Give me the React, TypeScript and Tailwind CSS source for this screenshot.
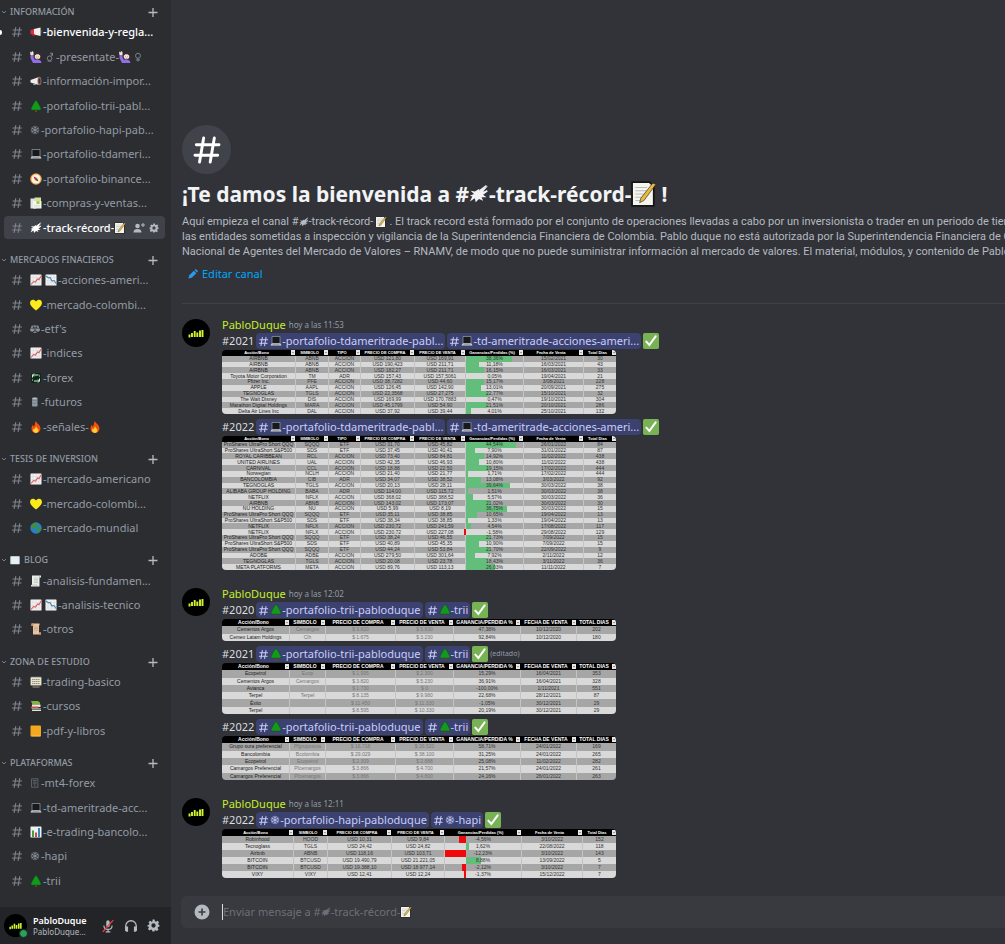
import type { ReactNode } from 'react';
import clsx from 'clsx';

/* ---------- drawings ---------- */

const chartGrid = (
  <>
    <rect x="1" y="1" width="22" height="22" rx="1" fill="#f3f1f1" />
    <path d="M6 1v22M12 1v22M18 1v22M1 7h22M1 13h22M1 18h22" stroke="#d5d3d6" strokeWidth="1" />
  </>
);

const raisingHand = (
  <>
    <path d="M7 13c-2-11 15-13 16-2 0 5 0 9 1 11H7z" fill="#3b2a36" />
    <circle cx="15" cy="11" r="5.500" fill="#f7e3cf" />
    <path d="M9 10c2-5 10-5 12 0l1-5-7-3-5 3z" fill="#3b2a36" />
    <path d="M1 7h6v6l3 5c4-2 12-1 13 6H6L1 14z" fill="#8f6fe6" />
    <path d="M0 1l3 2 1-3 3 2 0 6H1z" fill="#f7e3cf" />
    <path d="M13 14q2 2 4 0M13 10v1M17 10v1" stroke="#5a3b35" fill="none" />
  </>
);

const drawings: Record<string, ReactNode> = {
  megaphone: (
    <>
      <path d="M1 8l7-2v12l-7-2z" fill="#dd2e44" />
      <path d="M8 6l13-3v17L8 17z" fill="#f4f0ee" />
      <path d="M21 3c2 4 2 13 0 17" fill="#b8a7a7" />
      <path d="M4 17h6l1 3H5z" fill="#be1931" />
    </>
  ),
  speaker: (
    <>
      <path d="M1 10l17-6v16L1 15z" fill="#efedec" />
      <ellipse cx="19" cy="12" rx="4" ry="8.5" fill="#8d6460" />
      <ellipse cx="19" cy="12" rx="2" ry="5.5" fill="#3d3030" />
      <path d="M6 17l6 2v1H7z" fill="#aaa4a4" />
    </>
  ),
  hand: raisingHand,
  male: (
    <g fill="none" stroke="currentColor" strokeWidth="1.8">
      <circle cx="11" cy="15" r="5.5" />
      <path d="M14 10l4-7M12 3h6v6M6 22h10" />
    </g>
  ),
  female: (
    <g fill="none" stroke="currentColor" strokeWidth="1.8">
      <circle cx="12" cy="9" r="6" />
      <path d="M12 15v8M7 19h10" />
    </g>
  ),
  tree: (
    <>
      <path d="M10 18h4v6h-4z" fill="#6b4226" />
      <path d="M12 0c3 4 5 7 7 11 2 5 4 7 3 8-2 2-6 1-10 1s-8 1-10-1c-1-1 1-3 3-8 2-4 4-7 7-11z" fill="#14991f" stroke="#0a4a13" />
    </>
  ),
  snow: (
    <g fill="none" stroke="currentColor" strokeWidth="2">
      <path d="M12 2v20M3 7l18 10M21 7L3 17" />
      <path d="M8 3l4 4 4-4M8 21l4-4 4 4M2 11l5-2V4M22 13l-5 2v5M22 11l-5-2V4M2 13l5 2v5" strokeWidth="1.5" />
    </g>
  ),
  laptop: (
    <>
      <path d="M4 3h16v14H4z" fill="#17191d" stroke="#9a9fa6" strokeWidth="1.4" />
      <path d="M3 17h18l2 4H1z" fill="#cfd3d8" />
      <path d="M5 19h14" stroke="#6f747c" />
    </>
  ),
  compass: (
    <>
      <circle cx="12" cy="12" r="11.5" fill="#f0a64a" />
      <circle cx="12" cy="12" r="9" fill="#fff3dc" />
      <path d="M7 7l7 3-4 4z" fill="#c42f36" />
      <path d="M17 17l-7-3 4-4z" fill="#4a4d59" />
    </>
  ),
  dividers: (
    <>
      <path d="M1 3h12v20H1z" fill="#dfe4e8" />
      <path d="M9 1h13v8H9z" fill="#d6e2a0" />
      <path d="M6 8h17v15H6z" fill="#f5f5ef" />
      <path d="M13 8h6v6h-6z" fill="#a5c94b" />
      <path d="M8 17h12M8 20h12" stroke="#c6c9ba" />
    </>
  ),
  comet: (
    <>
      <path d="M7 9l5-3 1 2 10-6-6 7 5 0-5 4 4 3-6 0 2 4-5-2-4 4-1-5-6 4 3-6-3-1 5-2-4-4z" fill="currentColor" />
      <path d="M13 8l8-6M15 12l7-4" stroke="currentColor" strokeWidth="2" />
    </>
  ),
  memo: (
    <>
      <path d="M1 1h16l4 4v18H1z" fill="#f5f5ee" stroke="#141414" strokeWidth="1.6" />
      <path d="M4 6h11M4 9h11M4 12h9M4 15h7M4 18h6" stroke="#b9bdc3" />
      <path d="M23 3l-3-1L9 16l-1 4 4-2z" fill="#e8b83f" stroke="#2a2a2a" strokeWidth=".6" />
    </>
  ),
  up: (
    <>
      {chartGrid}
      <path d="M2 21l5-6 4 1 4-6 3 1 5-8" fill="none" stroke="#d8605f" strokeWidth="2.2" />
    </>
  ),
  down: (
    <>
      {chartGrid}
      <path d="M2 4l5 4 3-1 4 7 4-1 5 7" fill="none" stroke="#3b88b9" strokeWidth="2.2" />
    </>
  ),
  heart: <path d="M12 23C6 18 0 13 0 8 0 1 8-1 12 5c4-6 12-4 12 3 0 5-6 10-12 15z" fill="#fdea1a" />,
  scales: (
    <g fill="none" stroke="currentColor" strokeWidth="2">
      <path d="M12 3v17M8 20h8M4 5h16M5 5l-3 8M5 5l3 8M19 5l-3 8M19 5l3 8" />
      <path d="M1 13h8c0 6-8 6-8 0zM15 13h8c0 6-8 6-8 0z" fill="currentColor" />
    </g>
  ),
  exchange: (
    <>
      <rect x="2" y="2" width="20" height="20" rx="3" fill="#10271c" />
      <path d="M5 11V6h11M8 3L5 6l3 3M19 13v5H8M16 21l3-3-3-3" fill="none" stroke="#d7efd9" strokeWidth="2" />
      <path d="M16 6h3v4M5 14v4" stroke="#3ea85c" strokeWidth="2" fill="none" />
    </>
  ),
  drum: (
    <>
      <rect x="5" y="1" width="13" height="22" rx="2" fill="#8e99a4" />
      <path d="M5 8h13M5 15h13" stroke="#66717c" strokeWidth="1.4" />
      <ellipse cx="11.5" cy="3" rx="5" ry="1.5" fill="#c3cbd2" />
    </>
  ),
  fire: (
    <>
      <path d="M12 0c1 5 9 7 9 15 0 5-4 9-9 9s-9-3-9-9c0-4 2-6 3-8 0 3 1 4 2 4 2-3 1-7 4-11z" fill="#f4500d" />
      <path d="M12 10c0 4 5 5 5 9 0 3-3 5-5 5s-6-2-6-5c0-2 1-3 2-4 1 2 3 0 4-5z" fill="#ffcc3d" />
    </>
  ),
  globe: (
    <>
      <circle cx="12" cy="12" r="11.5" fill="#2a7fc4" />
      <path d="M4 5c4-5 10-4 11-2l-2 3 3 2-4 4-3-1-3 3-4-5zM14 12l6-2 3 4-5 7-4-2z" fill="#3f8f3c" />
    </>
  ),
  envelope: (
    <>
      <rect x="1" y="3" width="22" height="19" rx="1" fill="#e6f0f5" />
      <path d="M2 21V4h20v17" fill="none" stroke="#c9dbe4" />
    </>
  ),
  receipt: (
    <>
      <path d="M4 1h18v4h-3v18H2v-3h2z" fill="#e9eeea" />
      <path d="M8 6h8M8 9h8M8 12h8M8 15h8" stroke="#a3aba6" />
      <path d="M19 1v4M2 20h12v3" stroke="#9aa19d" fill="none" />
    </>
  ),
  scroll: (
    <>
      <path d="M3 1h16v4h-1v14h4v4H6V6H3z" fill="#e9c4a4" />
      <path d="M8 8h8M8 11h8M8 14h8" stroke="#b78c6a" />
      <path d="M3 1h4v5H3zM18 19h4v4h-4z" fill="#c8946c" />
    </>
  ),
  abacus: (
    <>
      <rect x="1" y="2" width="22" height="17" rx="2" fill="#e9e3d2" stroke="#7a766c" strokeWidth="1.4" />
      <path d="M4 7h16M4 11h16M4 15h16" stroke="#6c6a63" strokeDasharray="3 1" strokeWidth="1.4" />
      <path d="M5 22h14" stroke="#8a8579" strokeWidth="2.4" />
    </>
  ),
  books: (
    <>
      <path d="M2 2h14l4 3v4H5z" fill="#7cb342" />
      <path d="M4 9h17v5H4z" fill="#efe9e0" />
      <path d="M2 13h15v4H2z" fill="#c9554a" />
      <path d="M4 17h18v5H4z" fill="#e4e4dc" />
      <path d="M4 19h18" stroke="#3e6e3c" strokeWidth="1.6" />
    </>
  ),
  book: (
    <>
      <rect x="1" y="1" width="21" height="22" rx="2" fill="#f4a81d" />
      <path d="M3 22h18" stroke="#ffe2a8" strokeWidth="1" />
    </>
  ),
  server: (
    <g fill="none" stroke="#6d737d" strokeWidth="1.8">
      <rect x="4" y="2" width="15" height="20" />
      <path d="M7 6h9M7 10h9M7 14h9M10 18h3" />
    </g>
  ),
  bars: (
    <>
      <rect x="1" y="1" width="22" height="22" rx="1" fill="#edf1f2" />
      <path d="M4 9h4v13H4z" fill="#4a9b3f" />
      <path d="M10 13h4v9h-4z" fill="#cf4747" />
      <path d="M16 4h4v18h-4z" fill="#3487bd" />
    </>
  ),
  check: (
    <>
      <rect x="0" y="0" width="24" height="24" rx="2.5" fill="#77b255" />
      <path d="M5 13l4.5 5L19 5" fill="none" stroke="#fff" strokeWidth="3" strokeLinecap="round" />
    </>
  ),
};

function Emoji({ name, className = 'size-3' }: { name: string; className?: string }) {
  return (
    <svg viewBox="0 0 24 24" className={clsx('inline-block shrink-0', className)} aria-hidden="true">
      {drawings[name]}
    </svg>
  );
}

function Hash({ className }: { className: string }) {
  return (
    <svg viewBox="0 0 24 24" className={clsx('inline-block shrink-0', className)} fill="none" stroke="currentColor" strokeWidth="2.2" strokeLinecap="round" aria-hidden="true">
      <path d="M9.5 3L6.4 21M17.5 3l-3.1 18M4 8h17M3 16h17" />
    </svg>
  );
}

function Gear({ className }: { className: string }) {
  return (
    <svg viewBox="0 0 24 24" className={className} fill="currentColor" aria-hidden="true">
      <path
        fillRule="evenodd"
        d="M10 1h4l.7 3.2 1.9.8 2.8-1.7 2.8 2.8-1.7 2.8.8 1.9L23 11v3l-2.700.8-.8 1.900 1.700 2.800-2.800 2.800-2.800-1.700-1.900.8L14 23h-4l-.7-2.600-1.900-.8-2.800 1.700-2.800-2.800 1.700-2.800-.8-1.900L1 14v-3l2.700-.2.800-1.900L2.800 6.100l2.800-2.800L8.400 5l1.900-.8zM12 8a4 4 0 1 0 0 8 4 4 0 0 0 0-8z"
      />
    </svg>
  );
}

function Avatar({ className }: { className: string }) {
  return (
    <svg viewBox="0 0 28 28" className={clsx('shrink-0', className)} role="img" aria-label="PabloDuque">
      <circle cx="14" cy="14" r="14" fill="#000" />
      <path d="M7.500 15.500v3M10 14v4M12.700 12v6M15.300 13.500v4.500M18 11.500v6.500M20.500 11v7" stroke="#d3f52b" strokeWidth="1.900" />
    </svg>
  );
}

/* ---------- sidebar ---------- */

interface Channel {
  icons: string[];
  name: string;
  after?: string[];
  unread?: boolean;
  active?: boolean;
}

interface Category {
  title: string;
  icon?: string;
  channels: Channel[];
}

const categories: Category[] = [
  {
    title: 'INFORMACIÓN',
    channels: [
      { icons: ['megaphone'], name: '-bienvenida-y-regla...', unread: true },
      { icons: ['hand', 'male'], name: '-presentate-', after: ['hand', 'female'] },
      { icons: ['speaker'], name: '-información-impor...' },
      { icons: ['tree'], name: '-portafolio-trii-pabl...' },
      { icons: ['snow'], name: '-portafolio-hapi-pab...' },
      { icons: ['laptop'], name: '-portafolio-tdameri...' },
      { icons: ['compass'], name: '-portafolio-binance...' },
      { icons: ['dividers'], name: '-compras-y-ventas...' },
      { icons: ['comet'], name: '-track-récord-', after: ['memo'], active: true },
    ],
  },
  {
    title: 'MERCADOS FINACIEROS',
    channels: [
      { icons: ['up', 'down'], name: '-acciones-ameri...' },
      { icons: ['heart'], name: '-mercado-colombi...' },
      { icons: ['scales'], name: "-etf's" },
      { icons: ['up'], name: '-indices' },
      { icons: ['exchange'], name: '-forex' },
      { icons: ['drum'], name: '-futuros' },
      { icons: ['fire'], name: '-señales-', after: ['fire'] },
    ],
  },
  {
    title: 'TESIS DE INVERSION',
    channels: [
      { icons: ['up'], name: '-mercado-americano' },
      { icons: ['heart'], name: '-mercado-colombi...' },
      { icons: ['globe'], name: '-mercado-mundial' },
    ],
  },
  {
    title: 'BLOG',
    icon: 'envelope',
    channels: [
      { icons: ['receipt'], name: '-analisis-fundamen...' },
      { icons: ['up', 'down'], name: '-analisis-tecnico' },
      { icons: ['scroll'], name: '-otros' },
    ],
  },
  {
    title: 'ZONA DE ESTUDIO',
    channels: [
      { icons: ['abacus'], name: '-trading-basico' },
      { icons: ['books'], name: '-cursos' },
      { icons: ['book'], name: '-pdf-y-libros' },
    ],
  },
  {
    title: 'PLATAFORMAS',
    channels: [
      { icons: ['server'], name: '-mt4-forex' },
      { icons: ['laptop'], name: '-td-ameritrade-acc...' },
      { icons: ['bars'], name: '-e-trading-bancolo...' },
      { icons: ['snow'], name: '-hapi' },
      { icons: ['tree'], name: '-trii' },
    ],
  },
];

const iconSizes: Record<string, string> = {
  snow: 'size-[10px]',
  drum: 'size-[10px]',
  server: 'size-[10px]',
  scales: 'size-[10px]',
  male: 'size-[10px]',
  female: 'ml-[2px] size-[10px]',
};

function CategoryHeader({ category, first }: { category: Category; first: boolean }) {
  return (
    <div className={clsx('flex shrink-0 items-center pr-3 pl-[2px]', first ? 'h-5 pt-1' : 'h-7 pt-3')}>
      <h2 className="flex flex-1 items-center gap-1 text-[9px] leading-3 font-medium text-[#949ba4]">
        <svg viewBox="0 0 8 8" className="w-1 shrink-0" fill="none" stroke="currentColor" strokeWidth="1.5" aria-hidden="true">
          <path d="M0 2l4 4 4-4" />
        </svg>
        {category.icon && <Emoji name={category.icon} className="size-[10px]" />}
        {category.title}
      </h2>
      <button type="button" aria-label={`Crear canal en ${category.title}`} className="text-[#b5bac1]">
        <svg viewBox="0 0 12 12" className="size-3" stroke="currentColor" strokeWidth="1.3" aria-hidden="true">
          <path d="M6 2v9M1.500 6.500h9" />
        </svg>
      </button>
    </div>
  );
}

function ChannelRow({ channel }: { channel: Channel }) {
  return (
    <div className="relative flex min-h-5 flex-1 items-center pr-[6px] pl-1">
      {channel.unread && <span className="absolute left-0 h-[5px] w-[2px] rounded-r-full bg-white" />}
      <div className={clsx('flex h-[23px] min-w-0 flex-1 items-center rounded pl-[7px]', channel.active && 'bg-[#404249]')}>
        <a
          href="#canal"
          className={clsx(
            'flex min-w-0 flex-1 items-center text-[11px] leading-4 whitespace-nowrap',
            channel.unread && 'font-medium text-white',
            channel.active && 'font-medium text-white',
            !channel.unread && !channel.active && 'text-[#949ba4]',
          )}
        >
          <Hash className="mr-[7px] size-3 text-[#80848e]" />
          <span className="flex items-center gap-[3px]">
            {channel.icons.map((icon) => (
              <Emoji key={icon} name={icon} className={iconSizes[icon]} />
            ))}
          </span>
          <span className="ml-px">{channel.name}</span>
          {channel.after?.map((icon) => <Emoji key={icon} name={icon} className={iconSizes[icon]} />)}
        </a>
        {channel.active && (
          <span className="flex items-center gap-1 pr-[6px] text-[#b5bac1]">
            <button type="button" aria-label="Crear invitación">
              <svg viewBox="0 0 24 24" className="size-3" fill="currentColor" aria-hidden="true">
                <circle cx="9" cy="8" r="4.500" />
                <path d="M1 21c0-5 3-7 8-7s8 2 8 7zM19 2h2v3h3v2h-3v3h-2V7h-3V5h3z" />
              </svg>
            </button>
            <button type="button" aria-label="Editar canal">
              <Gear className="size-[10px]" />
            </button>
          </span>
        )}
      </div>
    </div>
  );
}

function UserPanel() {
  return (
    <div className="flex h-[37px] shrink-0 items-center bg-[#232428] pr-[11px] pl-1">
      <div className="relative mr-[6px]">
        <Avatar className="size-[23px]" />
        <span className="absolute -right-px -bottom-px size-[9px] rounded-full border border-[#232428] bg-[#23a55a]" />
      </div>
      <div className="min-w-0 flex-1">
        <div className="text-[9px] leading-[11px] font-semibold text-white">PabloDuque</div>
        <div className="text-[8px] leading-[11px] text-[#b5bac1]">PabloDuque...</div>
      </div>
      <div className="flex items-center gap-[9px] text-[#b5bac1]">
        <button type="button" aria-label="Silenciar">
          <svg viewBox="0 0 24 24" className="size-[14px]" aria-hidden="true">
            <rect x="9" y="2" width="6" height="12" rx="3" fill="currentColor" />
            <path d="M5 11c0 9 14 9 14 0M12 18v4M8 22h8" fill="none" stroke="currentColor" strokeWidth="2" />
            <path d="M3 22L21 2" stroke="#f23f42" strokeWidth="2.200" />
          </svg>
        </button>
        <button type="button" aria-label="Ensordecer">
          <svg viewBox="0 0 24 24" className="size-[14px]" aria-hidden="true">
            <path d="M3 20v-8a9 9 0 0 1 18 0v8" fill="none" stroke="currentColor" strokeWidth="2.200" />
            <path d="M2 13h5v9H4l-2-2zM22 13h-5v9h3l2-2z" fill="currentColor" />
          </svg>
        </button>
        <button type="button" aria-label="Ajustes de usuario">
          <Gear className="size-[13px]" />
        </button>
      </div>
    </div>
  );
}

function Sidebar() {
  return (
    <aside className="flex w-[171px] shrink-0 flex-col bg-[#2b2d31]">
      <nav className="flex min-h-0 flex-1 flex-col overflow-hidden pb-[14px]" aria-label="Canales">
        {categories.map((category, i) => (
          <section key={category.title} className="contents">
            <CategoryHeader category={category} first={i === 0} />
            {category.channels.map((channel) => (
              <ChannelRow key={channel.name} channel={channel} />
            ))}
          </section>
        ))}
      </nav>
      <UserPanel />
    </aside>
  );
}

/* ---------- spreadsheets ---------- */

// a row is its cells separated by "|"
interface SheetData {
  height: string;
  cols: number[];
  head: string;
  headText: string;
  rows: string[];
  barCol?: number;
  zero?: number;
  bars?: number[];
  faint?: boolean;
}

const tdCols = [73, 33, 32, 54, 51, 58, 60, 33];
const tdHead = 'Acción/Bono|SIMBOLO|TIPO|PRECIO DE COMPRA|PRECIO DE VENTA|Ganancias/Perdidas (%)|Fecha de Venta|Total Dias';
const triiCols = [67, 36, 70, 58, 67, 56, 40];
const triiHead = 'Acción/Bono|SIMBOLO|PRECIO DE COMPRA|PRECIO DE VENTA|GANANCIA/PERDIDA %|FECHA DE VENTA|TOTAL DIAS';

const td2021: SheetData = {
  height: 'h-16',
  cols: tdCols,
  head: tdHead,
  headText: 'text-[4px]',
  barCol: 5,
  bars: [80, 22, 32, 0, 31, 26, 38, 0, 36, 8],
  rows: [
    'AIRBNB|ABNB|ACCION|USD 121,80|USD 169,91|38,36%|15/02/2021|30',
    'AIRBNB|ABNB|ACCION|USD 190,423|USD 211,71|11,18%|16/03/2021|43',
    'AIRBNB|ABNB|ACCION|USD 182,27|USD 211,71|16,15%|16/03/2021|33',
    'Toyota Motor Corporation|TM|ADR|USD 157,43|USD 157,5061|0,05%|19/04/2021|21',
    'Pfizer Inc.|PFE|ACCION|USD 38,7282|USD 44,60|15,17%|3/08/2021|228',
    'APPLE|AAPL|ACCION|USD 126,45|USD 142,90|13,01%|20/09/2021|275',
    'TEGNOGLAS|TGLS|ACCION|USD 22,3568|USD 27,275|22,77%|15/10/2021|32',
    'The Walt Disney|DIS|ACCION|USD 169,99|USD 170,7883|0,47%|19/10/2021|304',
    'Marathon Digital Holdings|MARA|ACCION|USD 45,1799|USD 54,90|21,51%|20/10/2021|286',
    'Delta Air Lines Inc|DAL|ACCION|USD 37,92|USD 39,44|4,01%|25/10/2021|132',
  ],
};

const td2022: SheetData = {
  height: 'h-[134px]',
  cols: tdCols,
  head: tdHead,
  headText: 'text-[4px]',
  barCol: 5,
  bars: [88, 16, 31, 22, 40, 4, 27, 78, 4, 12, 42, 72, 20, 3, 9, -3, 42, 22, 42, 16, 38, 50],
  rows: [
    'ProShares UltraPro Short QQQ|SQQQ|ETF|USD 31,70|USD 45,82|44,54%|26/01/2022|84',
    'ProShares UltraShort S&P500|SDS|ETF|USD 37,45|USD 40,41|7,90%|31/01/2022|87',
    'ROYAL CARIBBEAN|RCL|ACCION|USD 73,40|USD 84,81|14,92%|11/02/2022|438',
    'UNITED AIRLINES|UAL|ACCION|USD 42,35|USD 46,93|10,80%|11/02/2022|438',
    'CARNIVAL|CCL|ACCION|USD 18,88|USD 22,50|19,15%|17/02/2022|444',
    'Norwegian|NCLH|ACCION|USD 21,40|USD 21,77|1,71%|17/02/2022|444',
    'BANCOLOMBIA|CIB|ADR|USD 34,07|USD 38,52|13,08%|3/03/2022|92',
    'TEGNOGLAS|TGLS|ACCION|USD 20,13|USD 28,11|39,64%|30/03/2022|38',
    'ALIBABA GROUP HOLDING|BABA|ADR|USD 114,00|USD 115,72|1,51%|30/03/2022|38',
    'NETFLIX|NFLX|ACCION|USD 368,02|USD 388,52|5,57%|30/03/2022|36',
    'AIRBNB|ABNB|ACCION|USD 143,02|USD 173,07|21,02%|30/03/2022|30',
    'NU HOLDING|NU|ACCION|USD 5,99|USD 8,19|36,75%|30/03/2022|15',
    'ProShares UltraPro Short QQQ|SQQQ|ETF|USD 35,11|USD 38,85|10,65%|19/04/2022|13',
    'ProShares UltraShort S&P500|SDS|ETF|USD 38,34|USD 38,85|1,33%|19/04/2022|13',
    'NETFLIX|NFLX|ACCION|USD 230,72|USD 241,59|4,54%|17/08/2022|117',
    'NETFLIX|NFLX|ACCION|USD 230,72|USD 227,08|-1,58%|29/08/2022|129',
    'ProShares UltraPro Short QQQ|SQQQ|ETF|USD 38,24|USD 46,55|21,73%|7/09/2022|15',
    'ProShares UltraShort S&P500|SDS|ETF|USD 40,89|USD 45,35|10,90%|7/09/2022|15',
    'ProShares UltraPro Short QQQ|SQQQ|ETF|USD 44,24|USD 53,84|21,70%|22/09/2022|9',
    'ADOBE|ADBE|ACCION|USD 279,50|USD 301,64|7,92%|2/11/2022|12',
    'TEGNOGLAS|TGLS|ACCION|USD 20,08|USD 23,78|18,43%|3/11/2022|36',
    'META PLATFORMS|META|ACCION|USD 89,76|USD 113,13|26,03%|11/11/2022|7',
  ],
};

const trii2020: SheetData = {
  height: 'h-[22px]',
  cols: triiCols,
  head: triiHead,
  headText: 'text-[5px]',
  faint: true,
  rows: [
    'Cementos Argos|Cemargos|$ 3.820|$ 5.630|47,38%|10/12/2020|202',
    'Cemex Latam Holdings|Clh|$ 1.675|$ 3.230|92,84%|10/12/2020|180',
  ],
};

const trii2021: SheetData = {
  height: 'h-[51px]',
  cols: triiCols,
  head: triiHead,
  headText: 'text-[5px]',
  faint: true,
  rows: [
    'Ecopetrol|Ecop|$ 1.995|$ 2.300|15,29%|16/04/2021|353',
    'Cementos Argos|Cemargos|$ 3.820|$ 5.230|36,91%|16/04/2021|328',
    'Avianca||$ 1.730|$ 0|-100,00%|1/11/2021|551',
    'Terpel|Terpel|$ 8.135|$ 9.980|22,68%|28/12/2021|87',
    'Éxito||$ 11.450|$ 11.330|-1,05%|30/12/2021|29',
    'Terpel||$ 8.595|$ 10.330|20,19%|30/12/2021|29',
  ],
};

const trii2022: SheetData = {
  height: 'h-11',
  cols: triiCols,
  head: triiHead,
  headText: 'text-[5px]',
  faint: true,
  rows: [
    'Grupo sura preferencial|Pfgruposura|$ 16.718|$ 26.520|58,71%|24/01/2022|169',
    'Bancolombia|Bcolombia|$ 29.029|$ 38.100|31,25%|24/01/2022|265',
    'Ecopetrol|Ecopetrol|$ 2.309|$ 2.888|25,08%|11/02/2022|282',
    'Camargos Preferencial|Pfcemargos|$ 3.866|$ 4.700|21,57%|24/01/2022|261',
    'Camargos Preferencial|Pfcemargos|$ 3.866|$ 4.800|24,16%|26/01/2022|263',
  ],
};

const hapi2022: SheetData = {
  height: 'h-[49px]',
  cols: [71, 34, 64, 53, 77, 61, 34],
  head: 'Acción/Bono|SIMBOLO|PRECIO DE COMPRA|PRECIO DE VENTA|Ganancias/Perdidas (%)|Fecha de Venta|Total Dias',
  headText: 'text-[4px]',
  barCol: 4,
  zero: 28,
  bars: [-10, 3, -28, 20, -5, -3],
  rows: [
    'Robinhood|HOOD|USD 10,31|USD 9,84|-4,56%|3/10/2022|152',
    'Tecnoglass|TGLS|USD 24,42|USD 24,82|1,62%|22/08/2022|118',
    'Airbnb|ABNB|USD 118,16|USD 103,71|-12,23%|3/10/2022|143',
    'BITCOIN|BTCUSD|USD 19.490,79|USD 21.221,05|8,88%|13/09/2022|5',
    'BITCOIN|BTCUSD|USD 19.388,10|USD 18.977,14|-2,12%|3/10/2022|7',
    'VIXY|VIXY|USD 12,41|USD 12,24|-1,37%|15/12/2022|7',
  ],
};

// rows share the height evenly, which table layout does not do at this size
function Sheet({ data }: { data: SheetData }) {
  const zero = data.zero ?? 0;
  return (
    <table
      className={clsx(
        "flex w-[394px] flex-col overflow-hidden rounded text-center font-['Liberation_Sans',sans-serif] text-[5px] leading-[5px] whitespace-nowrap",
        data.height,
      )}
    >
      <thead className="contents">
        <tr className={clsx('flex min-h-0 flex-1 bg-black leading-[5px] text-white', data.headText)}>
          {data.head.split('|').map((title, c) => (
            <th key={title} className="flex shrink-0 items-center p-0 font-bold" style={{ width: data.cols[c] }}>
              <span className="flex-1">{title}</span>
              <svg viewBox="0 0 4 5" className="h-[5px] w-1 shrink-0 bg-[#e8e8e8]" aria-hidden="true">
                <path d="M1 2h2L2 3.500z" fill="#777" />
              </svg>
            </th>
          ))}
        </tr>
      </thead>
      <tbody className="contents">
        {data.rows.map((row, r) => (
          <tr key={r} className="flex min-h-0 flex-1 text-[#333] odd:bg-[#a6a6a6] even:bg-[#d9d9d9]">
            {row.split('|').map((cell, c) => {
              const bar = data.bars?.[r] ?? 0;
              return (
                <td
                  key={c}
                  className={clsx(
                    'relative flex shrink-0 items-center justify-center border-l border-[#c4c4c4] p-0 first:border-l-0',
                    data.faint && c > 0 && c < 4 && 'text-[#777]',
                    c === 0 && 'text-[#222]',
                  )}
                  style={{ width: data.cols[c] }}
                >
                  {c === data.barCol && (
                    <span
                      className={clsx('absolute inset-y-0', bar < 0 ? 'bg-[#ee0a0a]' : 'bg-[#63be7b]')}
                      style={{
                        left: `${bar < 0 ? zero + bar : zero}%`,
                        width: `${Math.abs(bar)}%`,
                      }}
                    />
                  )}
                  <span className="relative">{cell}</span>
                </td>
              );
            })}
          </tr>
        ))}
      </tbody>
    </table>
  );
}

/* ---------- chat ---------- */

function Mention({ icon, name }: { icon: string; name: string }) {
  return (
    <a href="#canal" className="flex h-4 items-center rounded-sm bg-[#3c4270] px-[2px] text-[#c9cdfb]">
      <Hash className="mr-px size-[11px]" />
      <Emoji name={icon} className={icon === 'snow' ? 'size-[10px]' : 'size-3'} />
      {name}
    </a>
  );
}

interface Post {
  year: string;
  mentions: [string, string][];
  edited?: boolean;
  sheet: SheetData;
}

const tdMentions: [string, string][] = [
  ['laptop', '-portafolio-tdameritrade-pabl...'],
  ['laptop', '-td-ameritrade-acciones-ameri...'],
];
const triiMentions: [string, string][] = [
  ['tree', '-portafolio-trii-pabloduque'],
  ['tree', '-trii'],
];

const messages: { time: string; posts: Post[] }[] = [
  {
    time: 'hoy a las 11:53',
    posts: [
      { year: '#2021', mentions: tdMentions, sheet: td2021 },
      { year: '#2022', mentions: tdMentions, sheet: td2022 },
    ],
  },
  {
    time: 'hoy a las 12:02',
    posts: [
      { year: '#2020', mentions: triiMentions, sheet: trii2020 },
      { year: '#2021', mentions: triiMentions, sheet: trii2021, edited: true },
      { year: '#2022', mentions: triiMentions, sheet: trii2022 },
    ],
  },
  {
    time: 'hoy a las 12:11',
    posts: [
      {
        year: '#2022',
        mentions: [
          ['snow', '-portafolio-hapi-pabloduque'],
          ['snow', '-hapi'],
        ],
        sheet: hapi2022,
      },
    ],
  },
];

function Message({ time, posts }: { time: string; posts: Post[] }) {
  return (
    <article className="flex gap-3">
      <Avatar className="mt-[2px] size-7" />
      <div>
        <header className="flex h-[15px] items-center gap-[3px]">
          <h3 className="text-[11px] leading-[15px] text-[#c6ee2a]">PabloDuque</h3>
          <time className="text-[8px] leading-3 text-[#949ba4]">{time}</time>
        </header>
        <div className="flex flex-col gap-1">
          {posts.map((post) => (
            <div key={post.year}>
              <p className="flex h-[18px] items-center gap-[2px] text-[11px] leading-4 whitespace-nowrap text-[#dbdee1]">
                {post.year}
                {post.mentions.map(([icon, name]) => (
                  <Mention key={name} icon={icon} name={name} />
                ))}
                <Emoji name="check" className="size-4" />
                {post.edited && <span className="text-[7px] text-[#949ba4]">(editado)</span>}
              </p>
              <Sheet data={post.sheet} />
            </div>
          ))}
        </div>
      </div>
    </article>
  );
}

function Welcome() {
  return (
    <section className="border-b border-[#3f4147] pb-[21px]">
      <div className="flex size-[49px] items-center justify-center rounded-full bg-[#41434a] text-white">
        <Hash className="size-8" />
      </div>
      <h1 className="mt-1 flex h-8 items-center text-[21px] leading-8 font-bold whitespace-nowrap text-[#f2f3f5]">
        ¡Te damos la bienvenida a #
        <Emoji name="comet" className="size-5" />
        -track-récord-
        <Emoji name="memo" className="size-[26px]" />
        <span className="ml-1">!</span>
      </h1>
      <p className="mt-1 font-['Roboto','Noto_Sans',sans-serif] text-[11px] leading-[15px] whitespace-nowrap text-[#b5bac1]">
        Aquí empieza el canal #<Emoji name="comet" className="size-[10px]" />
        -track-récord-
        <Emoji name="memo" className="mx-[2px] size-3" />
        . El track record está formado por el conjunto de operaciones llevadas a cabo por un inversionista o trader en un periodo de tiempo
        <br />
        las entidades sometidas a inspección y vigilancia de la Superintendencia Financiera de Colombia. Pablo duque no está autorizada por la Superintendencia Financiera de Colombia
        <br />
        Nacional de Agentes del Mercado de Valores – RNAMV, de modo que no puede suministrar información al mercado de valores. El material, módulos, y contenido de Pablo Duque
      </p>
      <button type="button" className="mt-[7px] ml-[6px] flex h-4 items-center gap-1 text-[11px] leading-4 text-[#00a8fc]">
        <svg viewBox="0 0 24 24" className="size-[10px]" fill="#2d9ae8" aria-hidden="true">
          <path d="M1 23l2-8L14 4l6 6L9 21zM15.500 2.500l2-2h2l4 4v2l-2 2z" />
        </svg>
        Editar canal
      </button>
    </section>
  );
}

function Composer() {
  return (
    <form className="ml-[10px] flex h-8 shrink-0 items-center rounded-l-md bg-[#383a40] pl-[13px]">
      <button type="button" aria-label="Adjuntar" className="mr-3">
        <svg viewBox="0 0 16 16" className="size-4" aria-hidden="true">
          <circle cx="8" cy="8" r="7.500" fill="#b5bac1" />
          <path d="M8 4.500v7M4.500 8h7" stroke="#383a40" strokeWidth="1.600" />
        </svg>
      </button>
      <div className="relative flex h-5 flex-1 items-center text-[11px] leading-4">
        <input id="mensaje" type="text" className="h-full w-full bg-transparent text-[#dbdee1] outline-none" />
        <label htmlFor="mensaje" className="absolute left-0 flex items-center border-l border-[#dbdee1] whitespace-nowrap text-[#6d6f78]">
          Enviar mensaje a #<Emoji name="comet" className="size-[10px]" />
          -track-récord-
          <Emoji name="memo" />
        </label>
      </div>
    </form>
  );
}

export default function App() {
  return (
    <div className="flex h-screen overflow-hidden bg-[#313338] font-['Noto_Sans','Open_Sans',sans-serif]">
      <Sidebar />
      <main className="flex min-w-0 flex-1 flex-col justify-end overflow-hidden pb-4">
        <div className="flex flex-col pb-[18px] pl-[11px]">
          <Welcome />
          <div className="mt-[13px] flex flex-col gap-4">
            {messages.map((message) => (
              <Message key={message.time} {...message} />
            ))}
          </div>
        </div>
        <Composer />
      </main>
    </div>
  );
}
